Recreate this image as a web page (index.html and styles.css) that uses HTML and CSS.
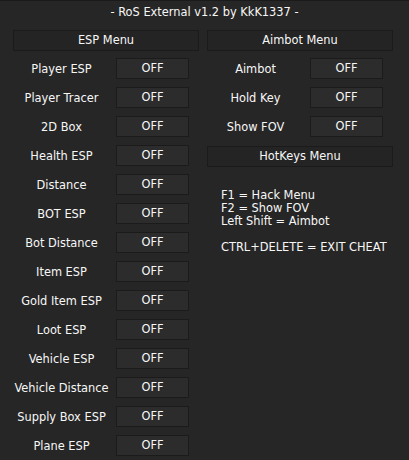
FILE: index.html
```html
<!DOCTYPE html>
<html>
<head>
<meta charset="utf-8">
<link rel="stylesheet" href="styles.css">
</head>
<body>
<div class="window">
  <div class="title">- RoS External v1.2 by KkK1337 -</div>
  <div class="columns">
    <div class="col">
      <div class="header">ESP Menu</div>
      <div class="rows">
        <div class="row"><span class="label">Player ESP</span><span class="btn">OFF</span></div>
        <div class="row"><span class="label">Player Tracer</span><span class="btn">OFF</span></div>
        <div class="row"><span class="label">2D Box</span><span class="btn">OFF</span></div>
        <div class="row"><span class="label">Health ESP</span><span class="btn">OFF</span></div>
        <div class="row"><span class="label">Distance</span><span class="btn">OFF</span></div>
        <div class="row"><span class="label">BOT ESP</span><span class="btn">OFF</span></div>
        <div class="row"><span class="label">Bot Distance</span><span class="btn">OFF</span></div>
        <div class="row"><span class="label">Item ESP</span><span class="btn">OFF</span></div>
        <div class="row"><span class="label">Gold Item ESP</span><span class="btn">OFF</span></div>
        <div class="row"><span class="label">Loot ESP</span><span class="btn">OFF</span></div>
        <div class="row"><span class="label">Vehicle ESP</span><span class="btn">OFF</span></div>
        <div class="row"><span class="label">Vehicle Distance</span><span class="btn">OFF</span></div>
        <div class="row"><span class="label">Supply Box ESP</span><span class="btn">OFF</span></div>
        <div class="row"><span class="label">Plane ESP</span><span class="btn">OFF</span></div>
      </div>
    </div>
    <div class="col">
      <div class="header">Aimbot Menu</div>
      <div class="rows">
        <div class="row"><span class="label">Aimbot</span><span class="btn">OFF</span></div>
        <div class="row"><span class="label">Hold Key</span><span class="btn">OFF</span></div>
        <div class="row"><span class="label">Show FOV</span><span class="btn">OFF</span></div>
      </div>
      <div class="header header-hot">HotKeys Menu</div>
      <div class="hotkeys">
        <div>F1 = Hack Menu</div>
        <div>F2 = Show FOV</div>
        <div>Left Shift = Aimbot</div>
        <div class="blank"></div>
        <div>CTRL+DELETE = EXIT CHEAT</div>
      </div>
    </div>
  </div>
</div>
</body>
</html>
```
FILE: styles.css
```css
html, body {
  margin: 0;
  padding: 0;
  background: #262626;
}
body {
  width: 409px;
  height: 460px;
  overflow: hidden;
}
.window {
  box-sizing: border-box;
  width: 409px;
  height: 460px;
  border-top: 1px solid #1a1a1a;
  font-family: "DejaVu Sans", sans-serif;
  font-size: 11.4px;
  color: #f7f7f7;
}
.title {
  height: 22px;
  line-height: 22px;
  text-align: center;
  margin-bottom: 7px;
}
.columns {
  display: flex;
  gap: 8px;
  padding-left: 13px;
}
.col {
  width: 186px;
  display: flex;
  flex-direction: column;
}
.header {
  box-sizing: border-box;
  height: 21px;
  line-height: 19px;
  text-align: center;
  background: #242424;
  border: 1px solid #1b1b1b;
  margin-bottom: 7px;
}
.header-hot {
  margin-top: 9px;
  margin-bottom: 0;
}
.rows {
  display: flex;
  flex-direction: column;
  gap: 8px;
}
.row {
  display: grid;
  grid-template-columns: 97px 73px;
  column-gap: 6px;
  align-items: center;
  height: 21px;
}
.label {
  text-align: center;
  white-space: nowrap;
}
.btn {
  box-sizing: border-box;
  height: 21px;
  line-height: 19px;
  text-align: center;
  background: #2c2c2c;
  border: 1px solid #1b1b1b;
}
.hotkeys {
  margin-top: 22px;
  padding-left: 14px;
  line-height: 13px;
}
.blank {
  height: 13px;
}
```
